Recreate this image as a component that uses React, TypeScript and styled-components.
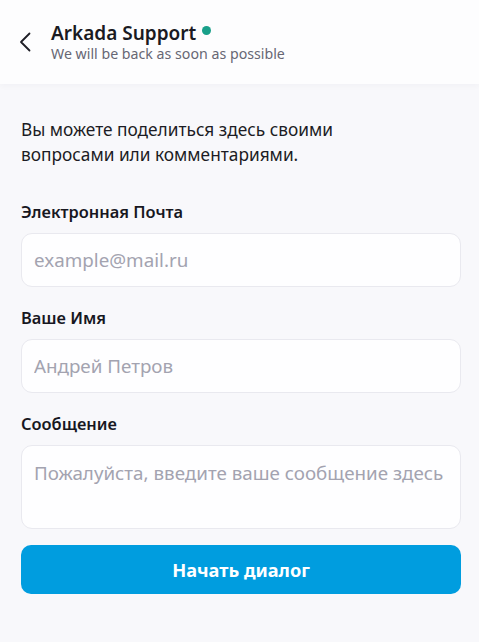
import React from 'react';
import styled, { createGlobalStyle } from 'styled-components';

const GlobalStyle = createGlobalStyle`
  html, body {
    margin: 0;
    padding: 0;
    background: #f8f8fb;
  }
  body {
    font-family: 'Noto Sans', 'Open Sans', sans-serif;
    color: #1c1c24;
  }
  * {
    box-sizing: border-box;
  }
`;

const Page = styled.div`
  width: 479px;
  min-height: 642px;
  display: flex;
  flex-direction: column;
  background: #f8f8fb;
`;

const Header = styled.header`
  height: 84px;
  display: flex;
  align-items: center;
  gap: 20px;
  padding: 0 19px;
  background: #fdfdfe;
  box-shadow: 0 2px 6px rgba(30, 30, 60, 0.03);
`;

const BackButton = styled.button`
  display: flex;
  align-items: center;
  justify-content: center;
  width: 12px;
  height: 20px;
  padding: 0;
  border: 0;
  background: none;
  cursor: pointer;
  color: #1e1e26;
`;

const HeaderText = styled.div`
  display: flex;
  flex-direction: column;
  margin-top: -1px;
`;

const TitleRow = styled.div`
  display: flex;
  align-items: center;
  gap: 6px;
`;

const Title = styled.h1`
  margin: 0;
  font-size: 19px;
  line-height: 24px;
  font-weight: 600;
  color: #1a1a22;
`;

const StatusDot = styled.span`
  width: 9px;
  height: 9px;
  border-radius: 50%;
  background: #19a08a;
  margin-top: -5px;
`;

const Subtitle = styled.div`
  font-size: 14.2px;
  line-height: 18px;
  color: #676774;
`;

const Form = styled.form`
  display: flex;
  flex-direction: column;
  padding: 33px 18px 0 21px;
`;

const Intro = styled.p`
  max-width: 400px;
  margin: 0 0 34px;
  font-size: 17.3px;
  line-height: 25px;
  color: #1c1c24;
`;

const Label = styled.label`
  font-size: 16.4px;
  line-height: 22px;
  font-weight: 600;
  color: #17171f;
  margin-bottom: 10px;
`;

const fieldBase = `
  width: 100%;
  border: 1px solid #e9e9ef;
  border-radius: 11px;
  background: #fefeff;
  font-family: 'Noto Sans', 'Open Sans', sans-serif;
  font-size: 18.8px;
  color: #1c1c24;
  padding: 0 12px;
  outline: none;
  &::placeholder {
    color: #a3a3b0;
  }
`;

const Input = styled.input`
  ${fieldBase}
  height: 54px;
  margin-bottom: 20px;
`;

const TextArea = styled.textarea`
  ${fieldBase}
  height: 84px;
  padding-top: 14px;
  resize: none;
  line-height: 26px;
  margin-bottom: 16px;
`;

const SubmitButton = styled.button`
  height: 49px;
  border: 0;
  border-radius: 10px;
  background: #009ddf;
  color: #ffffff;
  font-family: 'Noto Sans', 'Open Sans', sans-serif;
  font-size: 18.2px;
  font-weight: 700;
  cursor: pointer;
`;

function ChevronLeft() {
  return (
    <svg width="12" height="20" viewBox="0 0 12 20" fill="none">
      <path
        d="M10.5 1.5 L2 10 L10.5 18.5"
        stroke="currentColor"
        strokeWidth="1.8"
        strokeLinecap="round"
        strokeLinejoin="round"
      />
    </svg>
  );
}

export default function App() {
  return (
    <Page>
      <GlobalStyle />
      <Header>
        <BackButton aria-label="Назад">
          <ChevronLeft />
        </BackButton>
        <HeaderText>
          <TitleRow>
            <Title>Arkada Support</Title>
            <StatusDot />
          </TitleRow>
          <Subtitle>We will be back as soon as possible</Subtitle>
        </HeaderText>
      </Header>
      <Form onSubmit={(e) => e.preventDefault()}>
        <Intro>Вы можете поделиться здесь своими вопросами или комментариями.</Intro>
        <Label htmlFor="email">Электронная Почта</Label>
        <Input id="email" type="email" placeholder="example@mail.ru" />
        <Label htmlFor="name">Ваше Имя</Label>
        <Input id="name" type="text" placeholder="Андрей Петров" />
        <Label htmlFor="message">Сообщение</Label>
        <TextArea id="message" placeholder="Пожалуйста, введите ваше сообщение здесь" />
        <SubmitButton type="submit">Начать диалог</SubmitButton>
      </Form>
    </Page>
  );
}
